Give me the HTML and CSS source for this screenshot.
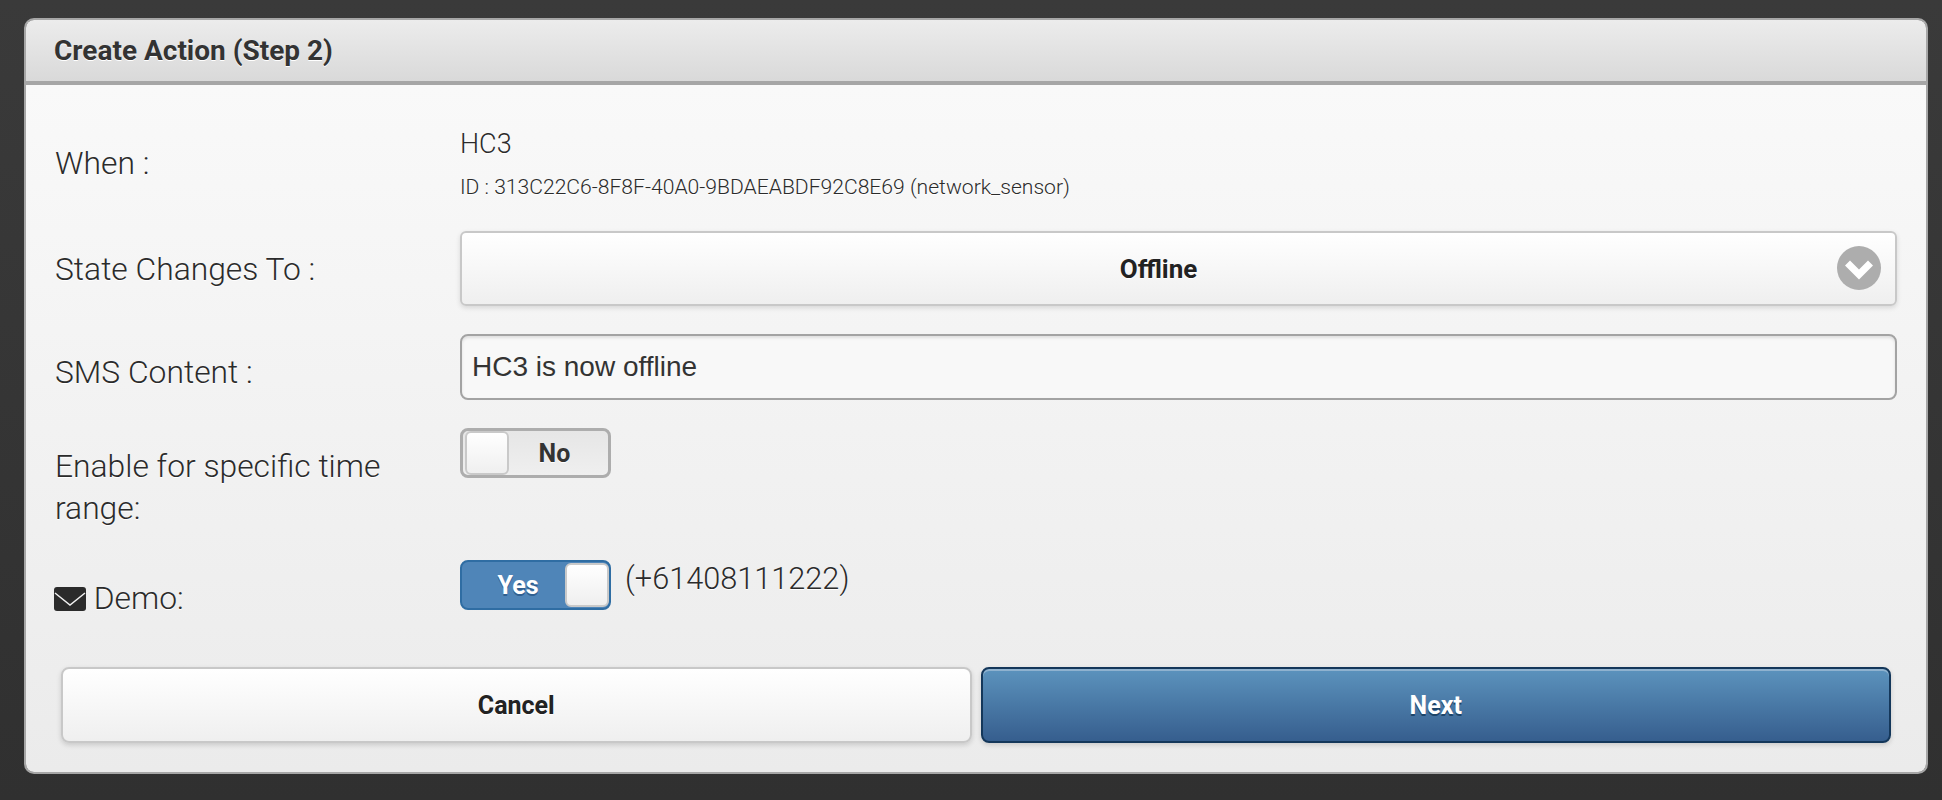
FILE: index.html
```html
<!DOCTYPE html>
<html lang="en">
<head>
    <meta charset="UTF-8">
    <meta name="viewport" content="width=device-width, initial-scale=1.0">
    <title>Create Action (Step 2)</title>
    <link rel="stylesheet" href="styles.css">
</head>
<body>
    <div class="card">
        <div class="card-header">
            <h1>Create Action (Step 2)</h1>
        </div>
        <form class="card-body">
            <div class="row row-when">
                <label class="field-label">When :</label>
                <div class="device">
                    <div class="device-name">HC3</div>
                    <div class="device-id">ID : 313C22C6-8F8F-40A0-9BDAEABDF92C8E69 (network_sensor)</div>
                </div>
            </div>

            <div class="row">
                <label class="field-label">State Changes To :</label>
                <div class="select-btn">
                    <span>Offline</span>
                    <span class="select-arrow">
                        <svg width="44" height="44" viewBox="0 0 44 44">
                            <circle cx="22" cy="22" r="22" fill="#adadad"/>
                            <path d="M8 19.500l5-5 9 9 9-9 5 5-14 14z" fill="#fff"/>
                        </svg>
                    </span>
                </div>
            </div>

            <div class="row">
                <label class="field-label label-sms">SMS Content :</label>
                <input class="text-input" type="text" value="HC3 is now offline">
            </div>

            <div class="row row-tall">
                <label class="field-label label-low">Enable for specific time range:</label>
                <div class="toggle toggle-off">
                    <span class="toggle-handle"></span>
                    <span class="toggle-text">No</span>
                </div>
            </div>

            <div class="row row-demo">
                <label class="field-label label-low">
                    <svg class="envelope" width="32" height="24" viewBox="0 0 32 24">
                        <rect width="32" height="24" rx="3" fill="#2b2b2b"/>
                        <path d="M1 6l15 12L31 6" fill="none" stroke="#f0f0f0" stroke-width="1.500"/>
                    </svg>
                    Demo:
                </label>
                <div class="toggle-wrap">
                    <div class="toggle toggle-on">
                        <span class="toggle-text">Yes</span>
                        <span class="toggle-handle"></span>
                    </div>
                    <span class="phone">(+61408111222)</span>
                </div>
            </div>

            <div class="actions">
                <button class="btn btn-cancel" type="button">Cancel</button>
                <button class="btn btn-next" type="button">Next</button>
            </div>
        </form>
    </div>
</body>
</html>
```

FILE: styles.css
```css
* {
    box-sizing: border-box;
}
body {
    font-family: Roboto, "Noto Sans", sans-serif;
    background: linear-gradient(#3a3a3a, #303030);
    margin: 0;
    padding: 18px 14px 26px 24px;
    height: 800px;
    color: #2b2b2b;
}
.card {
    height: 756px;
    border: 2px solid #a6a6a6;
    border-radius: 10px;
    overflow: hidden;
    display: flex;
    flex-direction: column;
}
.card-header {
    height: 65px;
    padding: 0 28px;
    display: flex;
    align-items: center;
    background: linear-gradient(#ececec, #d9d9d9);
    border-bottom: 4px solid #a6a6a6;
}
h1 {
    margin: 0;
    font-size: 28px;
    font-weight: 700;
    color: #333;
    text-shadow: 0 1px 0 #fff;
}
.card-body {
    flex: 1;
    padding: 37px 29px 0;
    background: linear-gradient(#f9f9f9, #ebebeb);
}
.row {
    display: grid;
    grid-template-columns: 405px 1fr;
    align-items: center;
    margin-bottom: 28px;
}
.row-when {
    height: 82px;
    margin-bottom: 27px;
}
.row-tall,
.row-demo {
    align-items: start;
}
.row-demo {
    margin-bottom: 48px;
}
.row-tall {
    margin-bottom: 31px;
}
.field-label {
    font-size: 31.800px;
    font-weight: 300;
    line-height: 42px;
    text-shadow: 0 1px 0 #fff;
}
.label-sms {
    padding-top: 10px;
}
.label-low {
    padding-top: 17px;
    padding-right: 60px;
}
.envelope {
    vertical-align: -2px;
    margin-left: -1px;
}
.device-name {
    font-size: 27px;
    font-weight: 300;
    line-height: 36px;
    text-shadow: 0 1px 0 #fff;
}
.device-id {
    font-size: 21.100px;
    font-weight: 300;
    line-height: 28px;
    margin-top: 11px;
    text-shadow: 0 1px 0 #fff;
}
.select-btn {
    height: 75px;
    padding-right: 40px;
    border: 2px solid #c8c8c8;
    border-radius: 6px;
    background: linear-gradient(#fff, #efefef);
    box-shadow: 0 2px 5px rgba(0, 0, 0, 0.12);
    font-size: 26px;
    font-weight: 700;
    color: #222;
    text-shadow: 0 1px 0 #fff;
    display: flex;
    align-items: center;
    justify-content: center;
    position: relative;
}
.select-arrow {
    position: absolute;
    right: 14px;
    top: 13px;
    height: 44px;
}
.text-input {
    height: 66px;
    width: 100%;
    padding: 0 10px;
    border: 2px solid #a3a3a3;
    border-radius: 8px;
    background: #f8f8f8;
    box-shadow: inset 0 2px 3px rgba(0, 0, 0, 0.1);
    font-family: "Liberation Sans", Arial, sans-serif;
    font-size: 28px;
    color: #333;
}
.toggle-wrap {
    display: flex;
    align-items: flex-start;
}
.toggle {
    width: 151px;
    height: 50px;
    border-radius: 8px;
    border: 3px solid #adadad;
    display: flex;
    align-items: center;
    font-size: 25px;
    font-weight: 700;
}
.toggle-off {
    background: linear-gradient(#e6e6e6, #efefef);
    color: #333;
    text-shadow: 0 1px 0 #fff;
    padding-left: 2px;
    padding-right: 8px;
}
.toggle-on {
    background: #4f85b8;
    border: 2px solid #2f6da3;
    color: #fff;
    text-shadow: 0 2px 0 #2f5f90;
    padding-left: 9px;
}
.toggle-handle {
    width: 44px;
    height: 44px;
    flex: none;
    border-radius: 6px;
    border: 2px solid #c9c9c9;
    background: linear-gradient(#fff, #efefef);
}
.toggle-text {
    flex: 1;
    text-align: center;
}
.phone {
    margin-left: 14px;
    font-size: 30.700px;
    font-weight: 300;
    line-height: 38px;
    text-shadow: 0 1px 0 #fff;
}
.actions {
    display: flex;
    gap: 9px;
    margin: 0 6px;
}
.btn {
    flex: 1;
    height: 76px;
    border-radius: 8px;
    font-family: Roboto, "Noto Sans", sans-serif;
    font-size: 25px;
    font-weight: 700;
    box-shadow: 0 2px 5px rgba(0, 0, 0, 0.15);
}
.btn-cancel {
    border: 2px solid #c8c8c8;
    background: linear-gradient(#fff, #efefef);
    color: #222;
    text-shadow: 0 1px 0 #fff;
}
.btn-next {
    border: 2px solid #14375a;
    background: linear-gradient(#5c93bd, #365e8e);
    box-shadow: inset 0 2px 0 #8fb2cf, 0 2px 5px rgba(0, 0, 0, 0.15);
    color: #fff;
    text-shadow: 0 2px 0 #1d4468;
}
```
